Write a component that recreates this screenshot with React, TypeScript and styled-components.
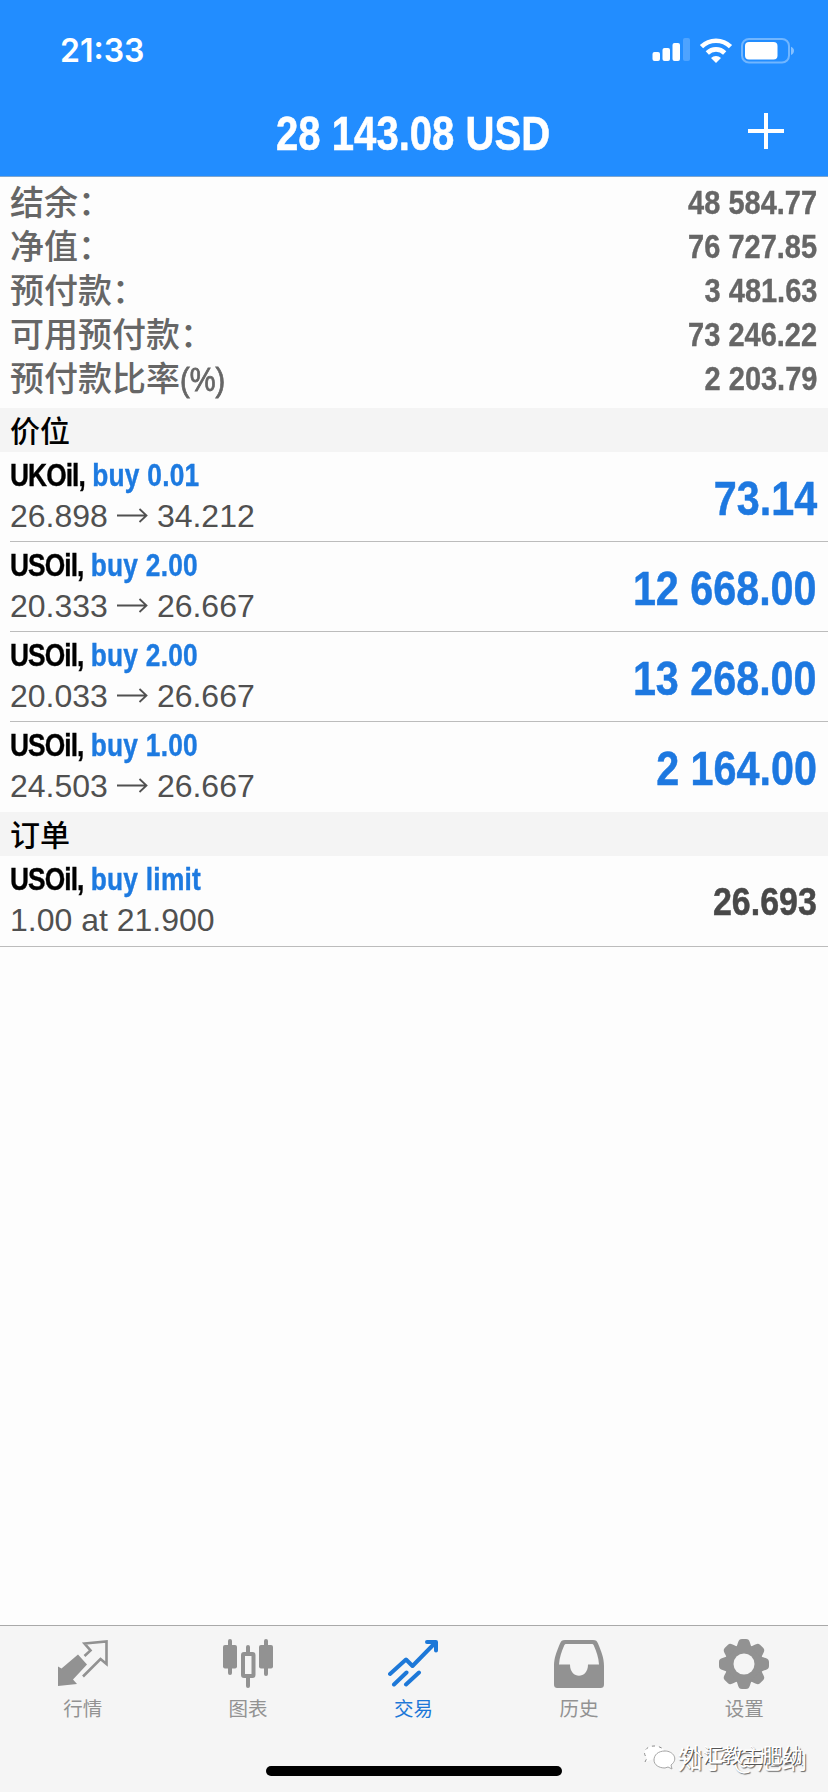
import React from "react";
import styled, { createGlobalStyle } from "styled-components";

interface Position {
  symbol: string;
  action: string;
  detail: string;
  target?: string;
  profit: string;
}

const summary = [
  { label: "结余：", value: "48 584.77" },
  { label: "净值：", value: "76 727.85" },
  { label: "预付款：", value: "3 481.63" },
  { label: "可用预付款：", value: "73 246.22" },
  { label: "预付款比率", unit: "(%)", value: "2 203.79" },
];

const positions: Position[] = [
  { symbol: "UKOil,", action: "buy 0.01", detail: "26.898", target: "34.212", profit: "73.14" },
  { symbol: "USOil,", action: "buy 2.00", detail: "20.333", target: "26.667", profit: "12 668.00" },
  { symbol: "USOil,", action: "buy 2.00", detail: "20.033", target: "26.667", profit: "13 268.00" },
  { symbol: "USOil,", action: "buy 1.00", detail: "24.503", target: "26.667", profit: "2 164.00" },
];

const orders: Position[] = [
  { symbol: "USOil,", action: "buy limit", detail: "1.00 at 21.900", profit: "26.693" },
];

const SignalIcon = () => (
  <svg width="38" height="24" viewBox="0 0 38 24" fill="#fff">
    <rect x="0.5" y="14" width="7.5" height="9" rx="2" />
    <rect x="10.5" y="10" width="7.5" height="13" rx="2" />
    <rect x="20.5" y="5" width="7.5" height="18" rx="2" />
    <rect x="31" y="0" width="7" height="23" rx="2" opacity="0.2" />
  </svg>
);

const WifiIcon = () => (
  <svg width="34" height="26" viewBox="0 0 34 26" fill="none" stroke="#fff" strokeWidth="4.6">
    <path d="M2.5 8.7a20.5 20.5 0 0 1 29 0" />
    <path d="M8.3 15a12.3 12.3 0 0 1 17.4 0" />
    <path d="M17 25l-5-5a7.2 7.2 0 0 1 10 0z" fill="#fff" stroke="none" />
  </svg>
);

const BatteryIcon = () => (
  <svg width="54" height="26" viewBox="0 0 54 26">
    <rect x="1" y="1" width="47" height="23.5" rx="7" fill="none" stroke="#fff" strokeWidth="2" opacity="0.36" />
    <rect x="4" y="4" width="32.5" height="17.5" rx="4" fill="#fff" />
    <path d="M50 8.7c4 1.5 4 6.7 0 8.2z" fill="#fff" opacity="0.45" />
  </svg>
);

const PlusIcon = () => (
  <svg width="36" height="36" viewBox="0 0 36 36" stroke="#fff" strokeWidth="4">
    <path d="M18 0v36M0 18h36" />
  </svg>
);

const ArrowIcon = () => (
  <svg width="31" height="16" viewBox="0 0 31 16" fill="none" stroke="currentColor" strokeWidth="1.8">
    <path d="M0 7.5h29.500M22.500 1l7 6.500l-7 6.500" />
  </svg>
);

const QuotesIcon = () => (
  <svg width="50" height="50" viewBox="0 0 50 50">
    <path d="M0 27.5L3.5 29.5 20 15.5 29 25.5 15 40.5 19 45 0 47z" fill="currentColor" />
    <path d="M26.5 17l6-5.500-6-7 22-2v22.500l-6-5-17.500 17.500" fill="none" stroke="currentColor" strokeWidth="2.6" />
  </svg>
);

const ChartIcon = () => (
  <svg width="50" height="50" viewBox="0 0 50 50" fill="currentColor">
    <rect x="5" y="0" width="4" height="36" rx="2" />
    <rect x="0" y="6" width="14" height="23.5" rx="2" />
    <rect x="23" y="6" width="4" height="9" rx="2" />
    <rect x="23" y="36" width="4" height="13" rx="2" />
    <rect x="20" y="15" width="10.5" height="22" rx="1" fill="none" stroke="currentColor" strokeWidth="4" />
    <rect x="41" y="0" width="4" height="37" rx="2" />
    <rect x="36" y="6" width="14" height="23.5" rx="2" />
  </svg>
);

const TradeIcon = () => (
  <svg
    width="50"
    height="50"
    viewBox="0 0 50 50"
    fill="none"
    stroke="currentColor"
    strokeWidth="4"
    strokeLinecap="round"
    strokeLinejoin="round"
  >
    <path d="M2 35L18 20.5 24.5 27 47 4M39 3h9v8.500M6 45.500L18.500 33.500M18 45.500L31 33.500" />
  </svg>
);

const HistoryIcon = () => (
  <svg width="50" height="50" viewBox="0 0 50 50">
    <path
      fill="currentColor"
      fillRule="evenodd"
      d="M11 1h28c3 0 4 1 5 3.500C47.500 13 50 19 50 27v18c0 3-1 4-4 4H4c-3 0-4-1-4-4V27C0 19 2.500 13 6 4.500 7 2 8 1 11 1zM12.500 5C11 5 10.500 5.500 10 7 7.500 13 5.500 18 5 25.500h11c0 15 18 15 18 0h11C44.500 18 42.500 13 40 7c-.5-1.500-1-2-2.500-2z"
    />
  </svg>
);

const SettingsIcon = () => (
  <svg width="50" height="50" viewBox="0 0 50 50" fill="currentColor">
    <mask id="gearHole">
      <rect width="50" height="50" fill="#fff" />
      <circle cx="25" cy="25" r="10.5" fill="#000" />
    </mask>
    <g mask="url(#gearHole)">
      <circle cx="25" cy="25" r="19" />
      {[0, 45, 90, 135, 180, 225, 270, 315].map((angle) => (
        <path
          key={angle}
          d="M17 8.5C19.500 5 18.500 0 23 0h4C31.500 0 30.500 5 33 8.500z"
          transform={`rotate(${angle} 25 25)`}
        />
      ))}
    </g>
  </svg>
);

const WeChatIcon = () => (
  <svg width="34" height="26" viewBox="0 0 34 26" fill="#fff" stroke="#8b8b8b" strokeWidth="1">
    <path d="M2 17l2-4C-2 7 4 1 11 1s12 4 11 9" strokeDasharray="3 4" />
    <path d="M22 6c-7 0-11 4-11 9s5 8 11 8l3-1 4 2-1-4c8-6 2-14-6-14z" stroke="#a5a5a5" />
  </svg>
);

const tabs = [
  { label: "行情", icon: <QuotesIcon /> },
  { label: "图表", icon: <ChartIcon /> },
  { label: "交易", icon: <TradeIcon />, active: true },
  { label: "历史", icon: <HistoryIcon /> },
  { label: "设置", icon: <SettingsIcon /> },
];

const PositionItem: React.FC<{ item: Position; order?: boolean }> = ({ item, order }) => {
  return (
    <PositionRow $order={order}>
      <PositionInfo>
        <PositionTitle>
          <strong>{item.symbol}</strong> <span>{item.action}</span>
        </PositionTitle>
        <PositionDetail>
          {item.detail}
          {item.target && (
            <>
              <ArrowIcon />
              {item.target}
            </>
          )}
        </PositionDetail>
      </PositionInfo>
      <Profit $order={order}>{item.profit}</Profit>
    </PositionRow>
  );
};

const App: React.FC = () => {
  return (
    <>
      <GlobalStyle />
      <Screen>
        <Header>
          <StatusBar>
            <Clock>21:33</Clock>
            <StatusIcons>
              <SignalIcon />
              <WifiIcon />
              <BatteryIcon />
            </StatusIcons>
          </StatusBar>
          <TitleBar>
            <Title>28 143.08 USD</Title>
            <AddButton>
              <PlusIcon />
            </AddButton>
          </TitleBar>
        </Header>
        <Summary>
          {summary.map((el) => (
            <SummaryRow key={el.label}>
              <SummaryLabel>
                {el.label}
                {el.unit && <Unit>{el.unit}</Unit>}
              </SummaryLabel>
              <SummaryValue>{el.value}</SummaryValue>
            </SummaryRow>
          ))}
        </Summary>
        <SectionTitle>价位</SectionTitle>
        <List>
          {positions.map((el, idx) => (
            <PositionItem key={idx} item={el} />
          ))}
        </List>
        <SectionTitle>订单</SectionTitle>
        <List>
          {orders.map((el, idx) => (
            <PositionItem key={idx} item={el} order />
          ))}
        </List>
        <TabBar>
          <Tabs>
            {tabs.map((el) => (
              <Tab key={el.label} $active={el.active}>
                {el.icon}
                <span>{el.label}</span>
              </Tab>
            ))}
          </Tabs>
          <HomeIndicator />
          <Watermark>
            <WeChatIcon />
            <WatermarkText>
              <span>知乎 @旭纳</span>
              <Overprint>外汇教主肥幼</Overprint>
            </WatermarkText>
          </Watermark>
        </TabBar>
      </Screen>
    </>
  );
};

export default App;

const GlobalStyle = createGlobalStyle`
  body {
    margin: 0;
    background-color: #fdfdfd;
  }
  * {
    box-sizing: border-box;
  }
  svg {
    display: block;
    flex-shrink: 0;
  }
`;

const Screen = styled.div`
  display: flex;
  flex-direction: column;
  width: 828px;
  height: 1792px;
  overflow: hidden;
  background-color: #fdfdfd;
  font-family: "Liberation Sans", "Noto Sans CJK SC", sans-serif;
`;

const Header = styled.header`
  height: 177px;
  background-color: #228dff;
  border-bottom: 1px solid #7ea6cf;
  color: #fff;
`;

const StatusBar = styled.div`
  display: flex;
  justify-content: space-between;
  height: 88px;
  padding: 38px 33px 0 60px;
`;

const Clock = styled.div`
  height: 26px;
  line-height: 26px;
  font-family: Inter, sans-serif;
  font-size: 32px;
  font-weight: 600;
`;

const StatusIcons = styled.div`
  display: flex;
  gap: 8.5px;
  height: 26px;
`;

const TitleBar = styled.div`
  display: grid;
  grid-template-columns: 1fr auto 1fr;
  align-items: center;
  height: 86px;
  padding: 0 44px;
`;

const Title = styled.h1`
  grid-column: 2;
  margin: 5px 2px 0 0;
  font-size: 48px;
  font-weight: bold;
  line-height: 50px;
  white-space: nowrap;
  -webkit-text-stroke: 0.6px currentColor;
  transform: scaleX(0.835);
`;

const AddButton = styled.button`
  justify-self: end;
  padding: 0;
  border: none;
  background: none;
`;

const Summary = styled.section`
  height: 231px;
  padding: 3px 11px 0 10px;
  color: #666;
`;

const SummaryRow = styled.div`
  display: flex;
  justify-content: space-between;
  height: 44px;
`;

const SummaryLabel = styled.span`
  font-family: "Noto Sans CJK SC", sans-serif;
  font-size: 34px;
  font-weight: 500;
  line-height: 42px;
`;

const Unit = styled.span`
  display: inline-block;
  font-family: "Liberation Sans", sans-serif;
  font-size: 33px;
  line-height: 38px;
  -webkit-text-stroke: 0.8px currentColor;
  transform: scaleX(0.88);
  transform-origin: left center;
`;

const SummaryValue = styled.span`
  font-size: 33.5px;
  font-weight: bold;
  line-height: 46px;
  -webkit-text-stroke: 0.4px currentColor;
  transform: scaleX(0.865);
  transform-origin: right center;
`;

const SectionTitle = styled.h2`
  height: 44px;
  margin: 0;
  padding-left: 10px;
  background-color: #f4f4f4;
  color: #000;
  font-family: "Noto Sans CJK SC", sans-serif;
  font-size: 30px;
  font-weight: 500;
  line-height: 42px;
`;

const List = styled.section`
  display: flex;
  flex-direction: column;
`;

const PositionRow = styled.div<{ $order?: boolean }>`
  display: flex;
  justify-content: space-between;
  height: ${({ $order }) => ($order ? 91 : 90)}px;
  margin-left: ${({ $order }) => ($order ? 0 : 10)}px;
  padding: 4px 11px 0 ${({ $order }) => ($order ? 10 : 0)}px;
  border-bottom: 1px solid #bcbcbc;
  &:last-child {
    border-color: ${({ $order }) => ($order ? "#bcbcbc" : "transparent")};
  }
`;

const PositionInfo = styled.div`
  display: flex;
  flex-direction: column;
`;

const PositionTitle = styled.div`
  color: #000;
  font-size: 31.5px;
  font-weight: bold;
  line-height: 38px;
  white-space: nowrap;
  -webkit-text-stroke: 0.4px currentColor;
  transform: scaleX(0.835);
  transform-origin: left center;
  strong {
    letter-spacing: -1.1px;
  }
  span {
    color: #1d7ae0;
    letter-spacing: 0.3px;
  }
`;

const PositionDetail = styled.div`
  display: flex;
  align-items: center;
  gap: 9px;
  color: #505050;
  font-size: 32px;
  line-height: 44px;
`;

const Profit = styled.div<{ $order?: boolean }>`
  color: ${({ $order }) => ($order ? "#484848" : "#1d78e0")};
  font-size: ${({ $order }) => ($order ? 39.5 : 48)}px;
  font-weight: bold;
  line-height: ${({ $order }) => ($order ? 82 : 86)}px;
  -webkit-text-stroke: 0.5px currentColor;
  transform: scaleX(0.86);
  transform-origin: right center;
`;

const TabBar = styled.nav`
  position: relative;
  height: 167px;
  margin-top: auto;
  background-color: #f5f5f5;
  border-top: 1px solid #a9a9a9;
`;

const Tabs = styled.div`
  display: grid;
  grid-template-columns: repeat(5, 1fr);
  height: 140px;
  padding: 13px 1px 0 0;
`;

const Tab = styled.div<{ $active?: boolean }>`
  display: flex;
  flex-direction: column;
  align-items: center;
  gap: 4px;
  color: ${({ $active }) => ($active ? "#1d78d8" : "#929292")};
  span {
    font-family: "Noto Sans CJK SC", sans-serif;
    font-size: 19.5px;
    line-height: 30px;
  }
`;

const HomeIndicator = styled.div`
  width: 296px;
  height: 10px;
  margin: 0 auto;
  border-radius: 5px;
  background-color: #000;
`;

const Watermark = styled.div`
  position: absolute;
  right: 21px;
  bottom: 18px;
  display: flex;
  align-items: center;
  gap: 1px;
`;

const WatermarkText = styled.div`
  position: relative;
  color: #fff;
  font-family: "Noto Sans CJK SC", sans-serif;
  font-size: 25px;
  line-height: 32px;
  white-space: nowrap;
  text-shadow: 1px 1px 1px #666;
`;

const Overprint = styled.span`
  position: absolute;
  left: 5px;
  top: -3px;
  font-size: 20px;
  line-height: 32px;
  text-shadow: 1px 1px 0 #555;
`;
